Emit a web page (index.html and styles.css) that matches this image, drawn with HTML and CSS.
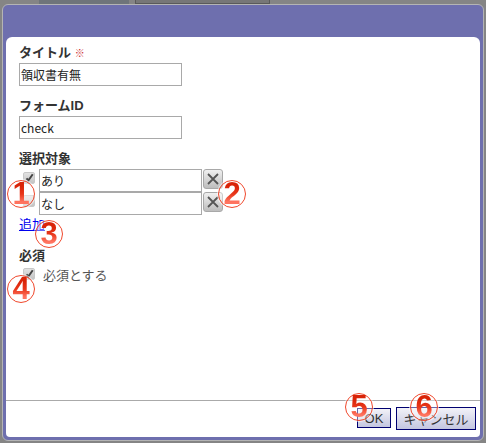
FILE: index.html
```html
<!DOCTYPE html>
<html lang="ja">
<head>
    <meta charset="utf-8">
    <title>選択項目の編集</title>
    <link rel="stylesheet" href="styles.css">
</head>
<body>

<div class="dialog">
    <div class="dialog-head"></div>
    <div class="dialog-body">
        <div class="form">
            <div class="field">
                <label class="label">タイトル <span class="req">※</span></label>
                <input class="text" type="text" value="領収書有無">
            </div>
            <div class="field">
                <label class="label">フォームID</label>
                <input class="text" type="text" value="check">
            </div>
            <div class="field">
                <label class="label">選択対象</label>
                <div class="option">
                    <span class="check"><svg viewBox="0 0 12 12"><path d="M3 6.5 L5.2 9 L10.5 1.5" /></svg></span>
                    <input class="text" type="text" value="あり">
                    <button class="remove"><svg viewBox="0 0 12 12"><path d="M1 1 L11 11 M11 1 L1 11" /></svg></button>
                </div>
                <div class="option">
                    <span class="check"></span>
                    <input class="text" type="text" value="なし">
                    <button class="remove"><svg viewBox="0 0 12 12"><path d="M1 1 L11 11 M11 1 L1 11" /></svg></button>
                </div>
                <a class="add" href="#">追加</a>
            </div>
            <div class="field">
                <label class="label">必須</label>
                <div class="required-row">
                    <span class="check"><svg viewBox="0 0 12 12"><path d="M3 6.5 L5.2 9 L10.5 1.5" /></svg></span>
                    <span class="required-text">必須とする</span>
                </div>
            </div>
        </div>
        <div class="foot">
            <button class="btn btn-ok">OK</button>
            <button class="btn btn-cancel">キャンセル</button>
        </div>
    </div>
</div>

<span class="mark mark1"><span class="digit">1</span></span>
<span class="mark mark2"><span class="digit">2</span></span>
<span class="mark mark3"><span class="digit">3</span></span>
<span class="mark mark4"><span class="digit">4</span></span>
<span class="mark mark5"><span class="digit">5</span></span>
<span class="mark mark6"><span class="digit">6</span></span>

</body>
</html>
```

FILE: styles.css
```css
html, body {
    margin: 0;
    height: 100%;
}

/* the page behind the dialog only shows as a strip along the top */
body {
    width: 486px;
    height: 443px;
    overflow: hidden;
    position: relative;
    box-sizing: border-box;
    padding: 4px 2px 2px 2px;
    background:
        linear-gradient(#5a5a5a, #5a5a5a) 135px 3px / 135px 1px no-repeat,
        linear-gradient(#5a5a5a, #5a5a5a) 135px 0 / 1px 3px no-repeat,
        linear-gradient(#5a5a5a, #5a5a5a) 269px 0 / 1px 3px no-repeat,
        linear-gradient(#777, #777) 135px 0 / 135px 3px no-repeat,
        linear-gradient(#6f757a, #6f757a) 39px 0 / 90px 4px no-repeat,
        #858585;
    font-family: "Liberation Sans", "Noto Sans CJK JP", sans-serif;
    font-size: 13px;
    color: #333;
}

.dialog {
    height: 100%;
    box-sizing: border-box;
    display: flex;
    flex-direction: column;
    background: #6e6fae;
    border: 1px solid #b4b4b4;
    border-radius: 6px;
    padding: 0 3px 3px 3px;
}

.dialog-head {
    height: 32px;
    flex: none;
}

.dialog-body {
    flex: 1;
    display: flex;
    flex-direction: column;
    background: #fff;
    border-radius: 6px 6px 4px 4px;
}

.form {
    flex: 1;
    padding: 8px 13px 0;
}

.field {
    margin-bottom: 12px;
}

.label {
    display: block;
    font-weight: bold;
    line-height: 15px;
    height: 18px;
}

.req {
    color: #c33;
    font-size: 10px;
    font-weight: normal;
}

.text {
    box-sizing: border-box;
    display: block;
    flex: none;
    width: 163px;
    height: 23px;
    border: 1px solid #a9a9a9;
    padding: 0 1px;
    margin: 0;
    font-family: "Noto Sans CJK JP", sans-serif;
    font-size: 12px;
    color: #222;
    background: #fff;
    border-radius: 0;
    outline: none;
}

.option {
    display: flex;
    align-items: flex-start;
    height: 23px;
}

.check {
    flex: none;
    box-sizing: border-box;
    width: 12px;
    height: 12px;
    margin: 3px 4px 0 4px;
    border: 1px solid #c8c8c8;
    border-radius: 2px;
    background: linear-gradient(#e2e2e2, #c4c4c4);
    display: block;
}

.check svg {
    display: block;
    width: 10px;
    height: 10px;
    fill: none;
    stroke: #444;
    stroke-width: 2.4;
}

.remove {
    flex: none;
    box-sizing: border-box;
    width: 20px;
    height: 20px;
    padding: 3px;
    margin: 0 0 0 1px;
    border: 1px solid #a8a8a8;
    border-radius: 3px;
    background: linear-gradient(#f0f0f0, #bdbdbd);
}

.remove svg {
    display: block;
    width: 12px;
    height: 12px;
    fill: none;
    stroke: #555;
    stroke-width: 1.8;
}

.add {
    display: block;
    margin-top: 2px;
    padding-bottom: 3px;
    color: #00e;
    line-height: 16px;
}

.required-row {
    display: flex;
    align-items: flex-start;
    height: 20px;
}

.required-row .check {
    margin-top: 2px;
    margin-right: 8px;
}

.required-text {
    line-height: 20px;
    color: #555;
}

.foot {
    flex: none;
    height: 37px;
    box-sizing: border-box;
    border-top: 1px solid #aaa;
    display: flex;
    justify-content: flex-end;
    align-items: flex-start;
    gap: 5px;
    padding: 6px 4px 0 0;
}

.btn {
    box-sizing: border-box;
    padding: 0;
    border: 1px solid #000070;
    border-radius: 0;
    background: linear-gradient(#f2f2f8, #c4c6e0);
    font-family: inherit;
    font-size: 13px;
    color: #333;
}

.btn-ok {
    width: 34px;
    height: 20px;
    margin-top: 1px;
}

.btn-cancel {
    width: 80px;
    height: 23px;
}

/* numbered callouts pasted on top of the screenshot */
.mark {
    position: absolute;
    box-sizing: border-box;
    width: 28px;
    height: 28px;
    border: 1px solid #f0482c;
    border-radius: 50%;
    background: rgba(255, 255, 255, 0.4);
    box-shadow: 0 0 0 1px rgba(255, 255, 255, 0.6);
    font-family: "Liberation Sans", sans-serif;
    font-size: 31px;
    font-weight: bold;
    line-height: 26px;
    text-align: center;
}

.digit {
    display: block;
    background: linear-gradient(#d92408 20%, #e8361a 50%, #ff7460 80%);
    -webkit-background-clip: text;
    background-clip: text;
    color: transparent;
}

.mark1 { left: 7px; top: 180px; }
.mark2 { left: 218px; top: 180px; }
.mark3 { left: 35px; top: 220px; }
.mark4 { left: 7px; top: 275px; }
.mark5 { left: 345px; top: 393px; }
.mark6 { left: 410px; top: 393px; }
```
